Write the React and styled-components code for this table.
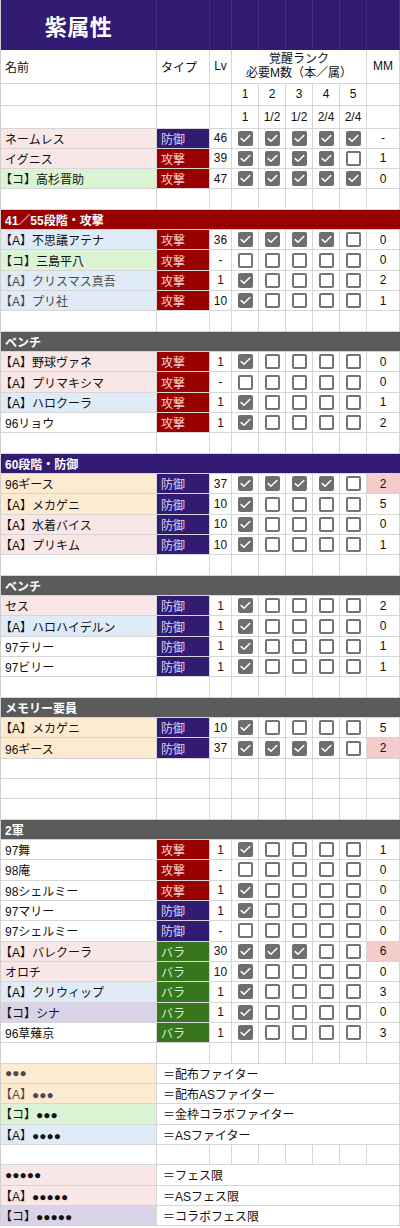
import React from "react";
import styled, { createGlobalStyle } from "styled-components";

const GlobalStyle = createGlobalStyle`
  body {
    margin: 0;
    background: #ffffff;
    font-family: "Liberation Sans", "Noto Sans CJK JP", Arial, sans-serif;
    color: #111111;
  }
`;

const COLS = "156px 53px 22px 27px 27px 27px 27px 27px 33px";
const LINE = "#d6d6d6";

const NAME_BG = {
  plain: "#ffffff",
  fes: "#f9e6e6",
  collab: "#dbf4d4",
  as: "#e0ebf8",
  dist: "#fdebd1",
  cfes: "#d9d2e9",
};

const TYPE = {
  atk: { label: "攻撃", bg: "#990000", color: "#f6d2d2" },
  def: { label: "防御", bg: "#311b73", color: "#ddd6ef" },
  bara: { label: "バラ", bg: "#38761d", color: "#dcefd4" },
};

const Sheet = styled.div`
  width: 400px;
  box-sizing: border-box;
  border-left: 1px solid #cfcfcf;
  font-size: 12px;
`;

const Row = styled.div`
  display: grid;
  grid-template-columns: ${COLS};
  height: ${(p) => p.$h || "20.33px"};
`;

const Cell = styled.div`
  box-sizing: border-box;
  display: flex;
  align-items: center;
  justify-content: ${(p) => (p.$center ? "center" : "flex-start")};
  padding: ${(p) => (p.$center ? "0" : "0 4px")};
  border-right: 1px solid ${LINE};
  border-bottom: 1px solid ${LINE};
  background: ${(p) => p.$bg || "#ffffff"};
  color: ${(p) => p.$color || "#111111"};
  white-space: nowrap;
  overflow: hidden;
  ${(p) => p.$span && `grid-column: ${p.$span};`}
`;

const OpenBracket = styled.span`
  margin-left: -5px;
`;

const TitleRow = styled(Row)`
  background: #311b73;
`;

const TitleCell = styled.div`
  box-sizing: border-box;
  border-right: 1px solid rgba(255, 255, 255, 0.08);
  display: flex;
  align-items: center;
  justify-content: center;
  color: #ffffff;
  font-family: "Noto Sans CJK JP", sans-serif;
  font-weight: 700;
  font-size: 22px;
  letter-spacing: 0.5px;
`;

const HeadStack = styled.div`
  display: flex;
  flex-direction: column;
  align-items: center;
  line-height: 14px;
`;

const Section = styled.div`
  box-sizing: border-box;
  height: 20.33px;
  display: flex;
  align-items: center;
  padding-left: 4px;
  background: ${(p) => p.$bg};
  color: #ffffff;
  font-weight: 700;
  border-bottom: 1px solid ${LINE};
`;

const Box = styled.div`
  box-sizing: border-box;
  width: 15px;
  height: 15px;
  border-radius: 2px;
  background: ${(p) => (p.$on ? "#6e6e6e" : "#ffffff")};
  border: ${(p) => (p.$on ? "none" : "2px solid #747474")};
  display: flex;
  align-items: center;
  justify-content: center;
`;

const Check = ({ on }) => (
  <Box $on={on}>
    {on && (
      <svg width="11" height="9" viewBox="0 0 11 9">
        <path d="M1.2 4.6 L4 7.3 L9.8 1.5" fill="none" stroke="#ffffff" strokeWidth="1.5" strokeLinecap="round" strokeLinejoin="round" />
      </svg>
    )}
  </Box>
);

// the CJK font leaves blank space in front of 【, pull it back to the cell edge
const Name = ({ text }) =>
  text.startsWith("【") ? (
    <>
      <OpenBracket>【</OpenBracket>
      {text.slice(1)}
    </>
  ) : (
    text
  );

const EmptyRow = () => (
  <Row>
    {Array.from({ length: 9 }).map((_, i) => (
      <Cell key={i} />
    ))}
  </Row>
);

const DataRow = ({ r }) => {
  const t = TYPE[r.type];
  return (
    <Row>
      <Cell $bg={NAME_BG[r.bg]} $color={r.muted ? "#4a4a4a" : undefined}>
        <Name text={r.name} />
      </Cell>
      <Cell $bg={t.bg} $color={t.color}>{t.label}</Cell>
      <Cell $center>{r.lv}</Cell>
      {[0, 1, 2, 3, 4].map((i) => (
        <Cell key={i} $center>
          <Check on={i < r.lvl} />
        </Cell>
      ))}
      <Cell $center $bg={r.hot ? "#f4cccc" : undefined}>{r.mm}</Cell>
    </Row>
  );
};

const LegendRow = ({ bg, left, right, muted }) => (
  <Row>
    <Cell $bg={NAME_BG[bg]} $color={muted ? "#4a4a4a" : undefined}>
      <Name text={left} />
    </Cell>
    <Cell $span="2 / -1" style={{ paddingLeft: 6 }}>{right}</Cell>
  </Row>
);

const top = [
  { name: "ネームレス", bg: "fes", type: "def", lv: "46", lvl: 5, mm: "-" },
  { name: "イグニス", bg: "fes", type: "atk", lv: "39", lvl: 4, mm: "1" },
  { name: "【コ】高杉晋助", bg: "collab", type: "atk", lv: "47", lvl: 5, mm: "0" },
];

const sections = [
  {
    title: "41／55段階・攻撃",
    color: "#990000",
    rows: [
      { name: "【A】不思議アテナ", bg: "as", type: "atk", lv: "36", lvl: 4, mm: "0" },
      { name: "【コ】三島平八", bg: "collab", type: "atk", lv: "-", lvl: 0, mm: "0" },
      { name: "【A】クリスマス真吾", bg: "as", type: "atk", lv: "1", lvl: 1, mm: "2", muted: true },
      { name: "【A】プリ社", bg: "as", type: "atk", lv: "10", lvl: 1, mm: "1", muted: true },
    ],
    after: 1,
  },
  {
    title: "ベンチ",
    color: "#5b5b5b",
    rows: [
      { name: "【A】野球ヴァネ", bg: "fes", type: "atk", lv: "1", lvl: 1, mm: "0" },
      { name: "【A】プリマキシマ", bg: "fes", type: "atk", lv: "-", lvl: 0, mm: "0" },
      { name: "【A】ハロクーラ", bg: "as", type: "atk", lv: "1", lvl: 1, mm: "1" },
      { name: "96リョウ", bg: "plain", type: "atk", lv: "1", lvl: 1, mm: "2" },
    ],
    after: 1,
  },
  {
    title: "60段階・防御",
    color: "#311b73",
    rows: [
      { name: "96ギース", bg: "dist", type: "def", lv: "37", lvl: 4, mm: "2", hot: true },
      { name: "【A】メカゲニ", bg: "dist", type: "def", lv: "10", lvl: 1, mm: "5" },
      { name: "【A】水着バイス", bg: "fes", type: "def", lv: "10", lvl: 1, mm: "0" },
      { name: "【A】プリキム", bg: "fes", type: "def", lv: "10", lvl: 1, mm: "1" },
    ],
    after: 1,
  },
  {
    title: "ベンチ",
    color: "#5b5b5b",
    rows: [
      { name: "セス", bg: "fes", type: "def", lv: "1", lvl: 1, mm: "2" },
      { name: "【A】ハロハイデルン", bg: "as", type: "def", lv: "1", lvl: 1, mm: "0" },
      { name: "97テリー", bg: "plain", type: "def", lv: "1", lvl: 1, mm: "1" },
      { name: "97ビリー", bg: "plain", type: "def", lv: "1", lvl: 1, mm: "1" },
    ],
    after: 1,
  },
  {
    title: "メモリー要員",
    color: "#5b5b5b",
    rows: [
      { name: "【A】メカゲニ", bg: "dist", type: "def", lv: "10", lvl: 1, mm: "5" },
      { name: "96ギース", bg: "dist", type: "def", lv: "37", lvl: 4, mm: "2", hot: true },
    ],
    after: 3,
  },
  {
    title: "2軍",
    color: "#5b5b5b",
    rows: [
      { name: "97舞", bg: "plain", type: "atk", lv: "1", lvl: 1, mm: "1" },
      { name: "98庵", bg: "plain", type: "atk", lv: "-", lvl: 0, mm: "0" },
      { name: "98シェルミー", bg: "plain", type: "atk", lv: "1", lvl: 1, mm: "0" },
      { name: "97マリー", bg: "plain", type: "def", lv: "1", lvl: 1, mm: "0" },
      { name: "97シェルミー", bg: "plain", type: "def", lv: "-", lvl: 0, mm: "0" },
      { name: "【A】バレクーラ", bg: "fes", type: "bara", lv: "30", lvl: 3, mm: "6", hot: true },
      { name: "オロチ", bg: "fes", type: "bara", lv: "10", lvl: 1, mm: "0" },
      { name: "【A】クリウィップ", bg: "as", type: "bara", lv: "1", lvl: 1, mm: "3" },
      { name: "【コ】シナ", bg: "cfes", type: "bara", lv: "1", lvl: 1, mm: "0" },
      { name: "96草薙京", bg: "plain", type: "bara", lv: "1", lvl: 1, mm: "3" },
    ],
    after: 1,
  },
];

const App = () => (
  <>
    <GlobalStyle />
    <Sheet>
      <TitleRow $h="49.5px">
        <TitleCell>紫属性</TitleCell>
        {Array.from({ length: 8 }).map((_, i) => (
          <TitleCell key={i} />
        ))}
      </TitleRow>

      <Row $h="34px">
        <Cell>名前</Cell>
        <Cell>タイプ</Cell>
        <Cell $center>Lv</Cell>
        <Cell $center $span="4 / 9">
          <HeadStack>
            <span>覚醒ランク</span>
            <span>必要M数（本／属）</span>
          </HeadStack>
        </Cell>
        <Cell $center>MM</Cell>
      </Row>
      <Row $h="22.5px">
        <Cell />
        <Cell />
        <Cell />
        {["1", "2", "3", "4", "5"].map((n) => (
          <Cell key={n} $center>{n}</Cell>
        ))}
        <Cell />
      </Row>
      <Row $h="22.5px">
        <Cell />
        <Cell />
        <Cell />
        {["1", "1/2", "1/2", "2/4", "2/4"].map((n, i) => (
          <Cell key={i} $center>{n}</Cell>
        ))}
        <Cell />
      </Row>

      {top.map((r, i) => (
        <DataRow key={i} r={r} />
      ))}
      <EmptyRow />

      {sections.map((s, i) => (
        <React.Fragment key={i}>
          <Section $bg={s.color}>{s.title}</Section>
          {s.rows.map((r, j) => (
            <DataRow key={j} r={r} />
          ))}
          {Array.from({ length: s.after }).map((_, k) => (
            <EmptyRow key={k} />
          ))}
        </React.Fragment>
      ))}

      <LegendRow bg="dist" left="●●●" right="＝配布ファイター" muted />
      <LegendRow bg="dist" left="【A】●●●" right="＝配布ASファイター" muted />
      <LegendRow bg="collab" left="【コ】●●●" right="＝金枠コラボファイター" />
      <LegendRow bg="as" left="【A】●●●●" right="＝ASファイター" />
      <EmptyRow />
      <LegendRow bg="fes" left="●●●●●" right="＝フェス限" />
      <LegendRow bg="fes" left="【A】●●●●●" right="＝ASフェス限" />
      <LegendRow bg="cfes" left="【コ】●●●●●" right="＝コラボフェス限" />
    </Sheet>
  </>
);

export default App;
